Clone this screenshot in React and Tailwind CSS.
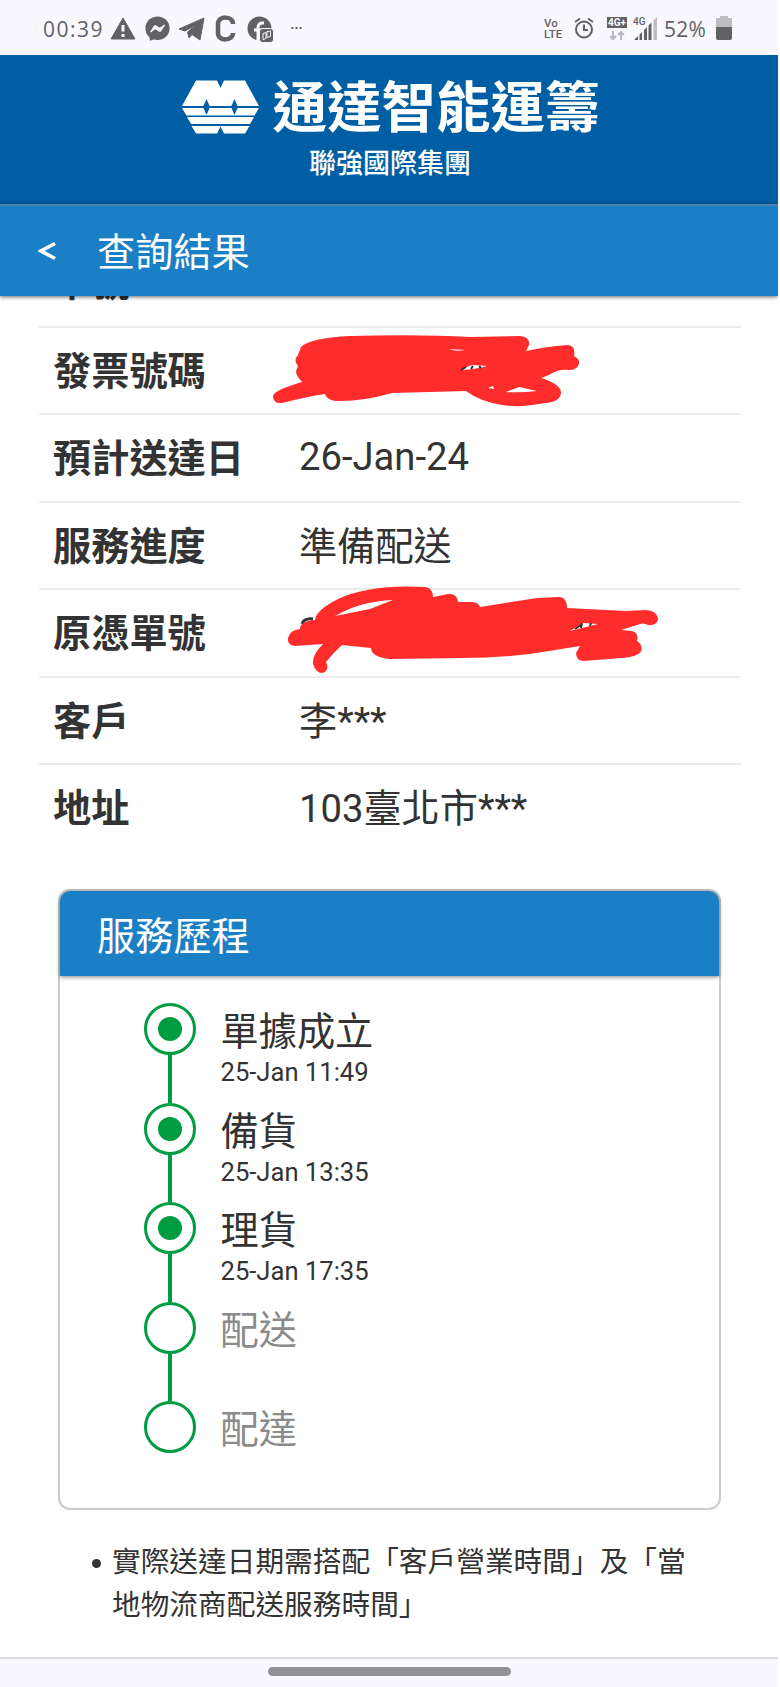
import { FaFacebookMessenger } from "react-icons/fa";

const details = [
  { label: "發票號碼", value: "" },
  { label: "預計送達日", value: "26-Jan-24", latin: true },
  { label: "服務進度", value: "準備配送" },
  { label: "原憑單號", value: "" },
  { label: "客戶", value: "李***" },
  { label: "地址", value: "103臺北市***" },
];

const steps = [
  { name: "單據成立", time: "25-Jan 11:49", done: true },
  { name: "備貨", time: "25-Jan 13:35", done: true },
  { name: "理貨", time: "25-Jan 17:35", done: true },
  { name: "配送", time: "", done: false },
  { name: "配達", time: "", done: false },
];

function StatusBar() {
  return (
    <div className="h-[55px] shrink-0 bg-[#f9f8ff] flex items-center pl-[43px] pr-[46px] pt-[3px] text-[#626264]">
      <span className="w-[61px] text-[21px] tracking-[1.500px] leading-none whitespace-nowrap pt-[1px] font-['Open_Sans',sans-serif]">00:39</span>
      <svg className="ml-[6px] w-[26px] h-[24px]" viewBox="0 0 26 24">
        <path d="M13 1 L25 22 H1 Z" fill="currentColor" stroke="currentColor" strokeLinejoin="round" />
        <path d="M13 8 V14.500 M13 17 V20" stroke="#f9f8ff" strokeWidth="3" />
      </svg>
      <FaFacebookMessenger className="ml-[9px] w-[25px] h-[25px] relative top-[-1px]" />
      <svg className="ml-[8px] w-[27px] h-[24px]" viewBox="0 0 27 24">
        <path d="M1 12 L26 1 L22 23 L14 17.500 L11 21 L9.500 15 L18 8 L7 14 Z" fill="currentColor" stroke="currentColor" strokeLinejoin="round" />
      </svg>
      <svg className="ml-[9px] w-[22px] h-[27px] mb-[2px]" viewBox="0 0 22 27">
        <path d="M19 9 C19 1 4 0 4 9 V18 C4 27 19 26 19 18" fill="none" stroke="currentColor" strokeWidth="4.500" />
      </svg>
      <svg className="ml-[11px] w-[27px] h-[27px]" viewBox="0 0 27 27">
        <circle cx="12.500" cy="12.500" r="12" fill="currentColor" />
        <path d="M11 25 V12 C11 8 13 6.500 17 7 M7 14 H17" fill="none" stroke="#f9f8ff" strokeWidth="3" />
        <rect x="12.500" y="12.500" width="14" height="14" rx="3" fill="currentColor" stroke="#f9f8ff" />
        <path d="M16 17.500 L19 16.500 V22.500 L16 23.500 Z M20 15.500 L23.500 15 V20.500 L20 21.500 Z" fill="none" stroke="#f9f8ff" />
      </svg>
      <svg className="ml-[17px] mb-[2px] w-[11px] h-[4px]" viewBox="0 0 11 4">
        <path d="M0.500 2 h2 M4.500 2 h2 M8.500 2 h2" stroke="currentColor" strokeWidth="2" />
      </svg>

      <div className="ml-auto w-[20px] text-[11.500px] leading-[11px] font-medium font-['Roboto',sans-serif]">
        <div>Vo</div>
        <div>LTE</div>
      </div>
      <svg className="ml-[10px] mb-[2px] w-[20px] h-[22px]" viewBox="0 0 20 22" fill="none" stroke="currentColor" strokeWidth="2">
        <circle cx="10" cy="12.500" r="8" />
        <path d="M10 7.500 V13 H14 M1 5 L6 1.500 M19 5 L14 1.500" />
      </svg>
      <div className="ml-[13px] mb-[2px] w-[20px] flex flex-col items-center">
        <span className="w-[20px] h-[11px] bg-[#626264] text-[#f9f8ff] text-[10px] leading-[11px] font-bold text-center font-['Roboto',sans-serif]">4G+</span>
        <svg className="mt-[3px] w-[18px] h-[9px]" viewBox="0 0 18 9" fill="none" stroke="#b9b8bd" strokeWidth="2">
          <path d="M5 0 V8 M2 5 L5 8 L8 5 M13 9 V1 M10 4 L13 1 L16 4" />
        </svg>
      </div>
      <svg className="ml-[6px] mb-[3px] w-[25px] h-[24px]" viewBox="0 0 25 24">
        <text x="0" y="8.500" fontSize="10" fontWeight="500" fill="currentColor" fontFamily="Roboto, sans-serif">4G</text>
        <path d="M1 24 L5 20 V24 Z M6.500 24 V18.500 L9 16 V24 Z M11 24 V14 L14 11 V24 Z M15.500 24 V9.500 L18.500 6.500 V24 Z" fill="currentColor" />
        <path d="M20.500 24 V4.500 L24 1 V24 Z" fill="#bdbcc1" />
      </svg>
      <span className="ml-[6px] w-[43px] text-[21px] tracking-[0.300px] leading-none whitespace-nowrap pt-[1px] font-['Open_Sans',sans-serif]">52%</span>
      <svg className="ml-[9px] mb-[3px] w-[16px] h-[24px]" viewBox="0 0 16 24">
        <path d="M4 0 H12 V2 H16 V11 H0 V2 H4 Z" fill="#bdbcc1" />
        <path d="M0 11 H16 V22 Q16 24 14 24 H2 Q0 24 0 22 Z" fill="currentColor" />
      </svg>
    </div>
  );
}

function Logo() {
  return (
    <svg className="w-[77px] h-[54px]" viewBox="0 0 77 54">
      <path d="M14 0.500 H35 L38.500 8 L42 0.500 H63 L77 26 H0 Z" fill="#fff" />
      <path d="M0 28 H77 L72.500 35.500 H4.500 Z M5 37 H72 L68 44 H9 Z M9.500 46 H67.500 L63 53.500 H42 L38.500 46.500 L35 53.500 H14 Z" fill="#fff" />
      <path d="M24.500 19 L28 27 L24.500 35 L21 27 Z M52.500 19 L56 27 L52.500 35 L49 27 Z" fill="#005ea4" />
    </svg>
  );
}

function BrandHeader() {
  return (
    <header className="h-[149px] shrink-0 bg-[#005ea4] text-white flex flex-col items-center pt-[25px]">
      <div className="flex items-center h-[54px] gap-[13px] pl-[4px]">
        <Logo />
        <h1 className="text-[54.500px] leading-[54px] font-bold whitespace-nowrap pt-[2px]">通達智能運籌</h1>
      </div>
      <div className="mt-[12px] pl-[2px] text-[27px] leading-[36px] font-medium">聯強國際集團</div>
    </header>
  );
}

// Hand drawn marks that hide the private numbers
function InvoiceMark() {
  return (
    <svg className="absolute left-[272px] top-[9px] w-[310px] h-[72px]" viewBox="272 335 310 72">
      <path d="M301 347 Q310 338 350 336 Q420 334 470 337 L520 336 Q530 337 529 345 L526 351 Q550 346 568 345 Q576 346 574 356 Q580 359 579 364 Q577 370 569 370 Q558 369 549 375 L541 378 Q561 384 561 393 Q560 402 545 403 Q520 408 502 405 Q479 401 466 391 L392 393 Q360 402 336 401 Q327 400 325 394 Q310 396 282 403 Q273 404 273 396 Q274 390 302 382 Q296 376 296 371 L298 366 Q293 360 298 355 Z" fill="#ff2c2c" />
      <path d="M462 370 Q469 365 474 365 L487 366 Q477 369 462 370 Z M506 392 L519 387 L537 391 Q520 393 506 392 Z M488 388 L493 386 L494 389 Z M449 349 L465 350 Q456 352 449 349 Z" fill="#fff" />
      <path d="M461 370 L466 367 M471 369 L473 366 M479 366 L481 368" stroke="#333" strokeWidth="2" />
    </svg>
  );
}

function OrderMark() {
  return (
    <svg className="absolute left-[285px] top-[-3px] w-[378px] h-[90px]" viewBox="285 585 378 90">
      <path d="M302 624 Q304 618 313 619" fill="none" stroke="#333" strokeWidth="3" />
      <path d="M315 620 Q316 610 338 599 Q370 584 425 587 Q433 588 433 597 L448 594 Q457 593 458 602 L473 602 Q479 603 480 607 L537 598 L560 597 Q567 598 567 608 L626 611 L646 610 Q658 611 658 620 Q656 626 648 625 Q643 622 637 625 L621 630 L632 631 Q639 633 637 641 Q643 645 641 651 Q638 657 621 658 L583 661 Q576 660 576 653 L580 646 L549 651 Q510 658 462 658 L390 659 Q371 657 371 648 L342 645 Q333 653 326 662 Q330 671 322 673 Q316 673 313 664 Q312 655 323 644 L295 646 Q287 645 288 638 Q290 630 300 629 Q300 621 315 620 Z" fill="#ff2c2c" />
      <path d="M335 616 Q361 601 393 600 L370 609 Z M570 631 L583 623 L598 624 Z" fill="#fff" />
      <path d="M575 629 L581 625 M581 628 L582 623 M590 626 L591 623" stroke="#333" strokeWidth="2" />
    </svg>
  );
}

function DetailRow({ label, value, latin }) {
  return (
    <div className="h-[87.400px] border-t-2 border-[#ebebeb] ml-[39px] mr-[37px] pl-[14px] flex items-center text-[38.200px] text-[#333]">
      <div className="w-[246px] font-bold whitespace-nowrap pt-[4px]">{label}</div>
      <div className={latin ? "whitespace-nowrap" : "whitespace-nowrap pt-[4px]"}>{value}</div>
    </div>
  );
}

function Step({ name, time, done, last }) {
  return (
    <li className="flex h-[99.500px]">
      <div className="w-[52px] flex flex-col items-center">
        <div className="w-[52px] h-[52px] shrink-0 rounded-full border-3 border-[#009c41] flex items-center justify-center">
          {done && <div className="w-[24px] h-[24px] rounded-full bg-[#009c41]" />}
        </div>
        {!last && <div className="w-[4px] grow bg-[#009c41]" />}
      </div>
      <div className="ml-[24.500px] pt-[5px]">
        <div className={done ? "text-[38.200px] leading-[48px] text-[#333]" : "text-[38.200px] leading-[48px] text-[#8b8b8b]"}>{name}</div>
        <div className="text-[25.600px] leading-[32px] text-[#333]">{time}</div>
      </div>
    </li>
  );
}

export default function App() {
  return (
    <div className="w-[778px] h-[1687px] overflow-hidden bg-white flex flex-col font-['Roboto','Noto_Sans_CJK_TC',sans-serif]">
      <StatusBar />
      <BrandHeader />
      <nav className="relative h-[92px] shrink-0 bg-[#1b7fc6] border-t-2 border-[#4a85b5] shadow-[0_1px_4px_rgba(0,0,0,0.6)] flex items-center text-white">
        <svg className="ml-[38px] w-[18px] h-[20px]" viewBox="0 0 18 20">
          <path d="M17 2.500 L3 10 L17 17.500" fill="none" stroke="currentColor" strokeWidth="3.600" />
        </svg>
        <span className="ml-[41px] text-[38.200px] leading-none pt-[4px]">查詢結果</span>
      </nav>

      {/* Row that is scrolled under the nav bar */}
      <div className="h-[30px] shrink-0 overflow-hidden flex flex-col justify-end pl-[53px] text-[38.200px] font-bold text-[#333]">
        <div className="leading-[38px] mb-[24px]">單號</div>
      </div>

      <section className="shrink-0">
        {details.map((row, i) => (
          <div key={row.label} className="relative">
            <DetailRow {...row} />
            {i === 0 && <InvoiceMark />}
            {i === 3 && <OrderMark />}
          </div>
        ))}
      </section>

      <section className="mt-[39px] ml-[58px] w-[663px] h-[621px] shrink-0 rounded-xl border-2 border-[#cbcbcb]">
        <h2 className="h-[85px] rounded-t-[10px] bg-[#1b7fc6] shadow-[0_1px_4px_rgba(0,0,0,0.5)] pl-[37px] pt-[7px] flex items-center text-[38.200px] text-white">服務歷程</h2>
        <ul className="mt-[27px] ml-[84px]">
          {steps.map((step, i) => (
            <Step key={step.name} {...step} last={i === steps.length - 1} />
          ))}
        </ul>
      </section>

      <div className="mt-[31px] ml-[92px] w-[610px] flex text-[28.700px] leading-[42.500px] text-[#333]">
        <span className="mt-[18px] mr-[11px] w-[9px] h-[9px] shrink-0 rounded-full bg-[#333]" />
        <p className="w-[590px]">實際送達日期需搭配「客戶營業時間」及「當地物流商配送服務時間」</p>
      </div>

      <footer className="mt-auto h-[30px] shrink-0 bg-[#f9f8ff] border-t-2 border-[#dddce6] flex justify-center pt-[8px]">
        <div className="w-[243px] h-[9px] rounded-full bg-[#929196]" />
      </footer>
    </div>
  );
}
